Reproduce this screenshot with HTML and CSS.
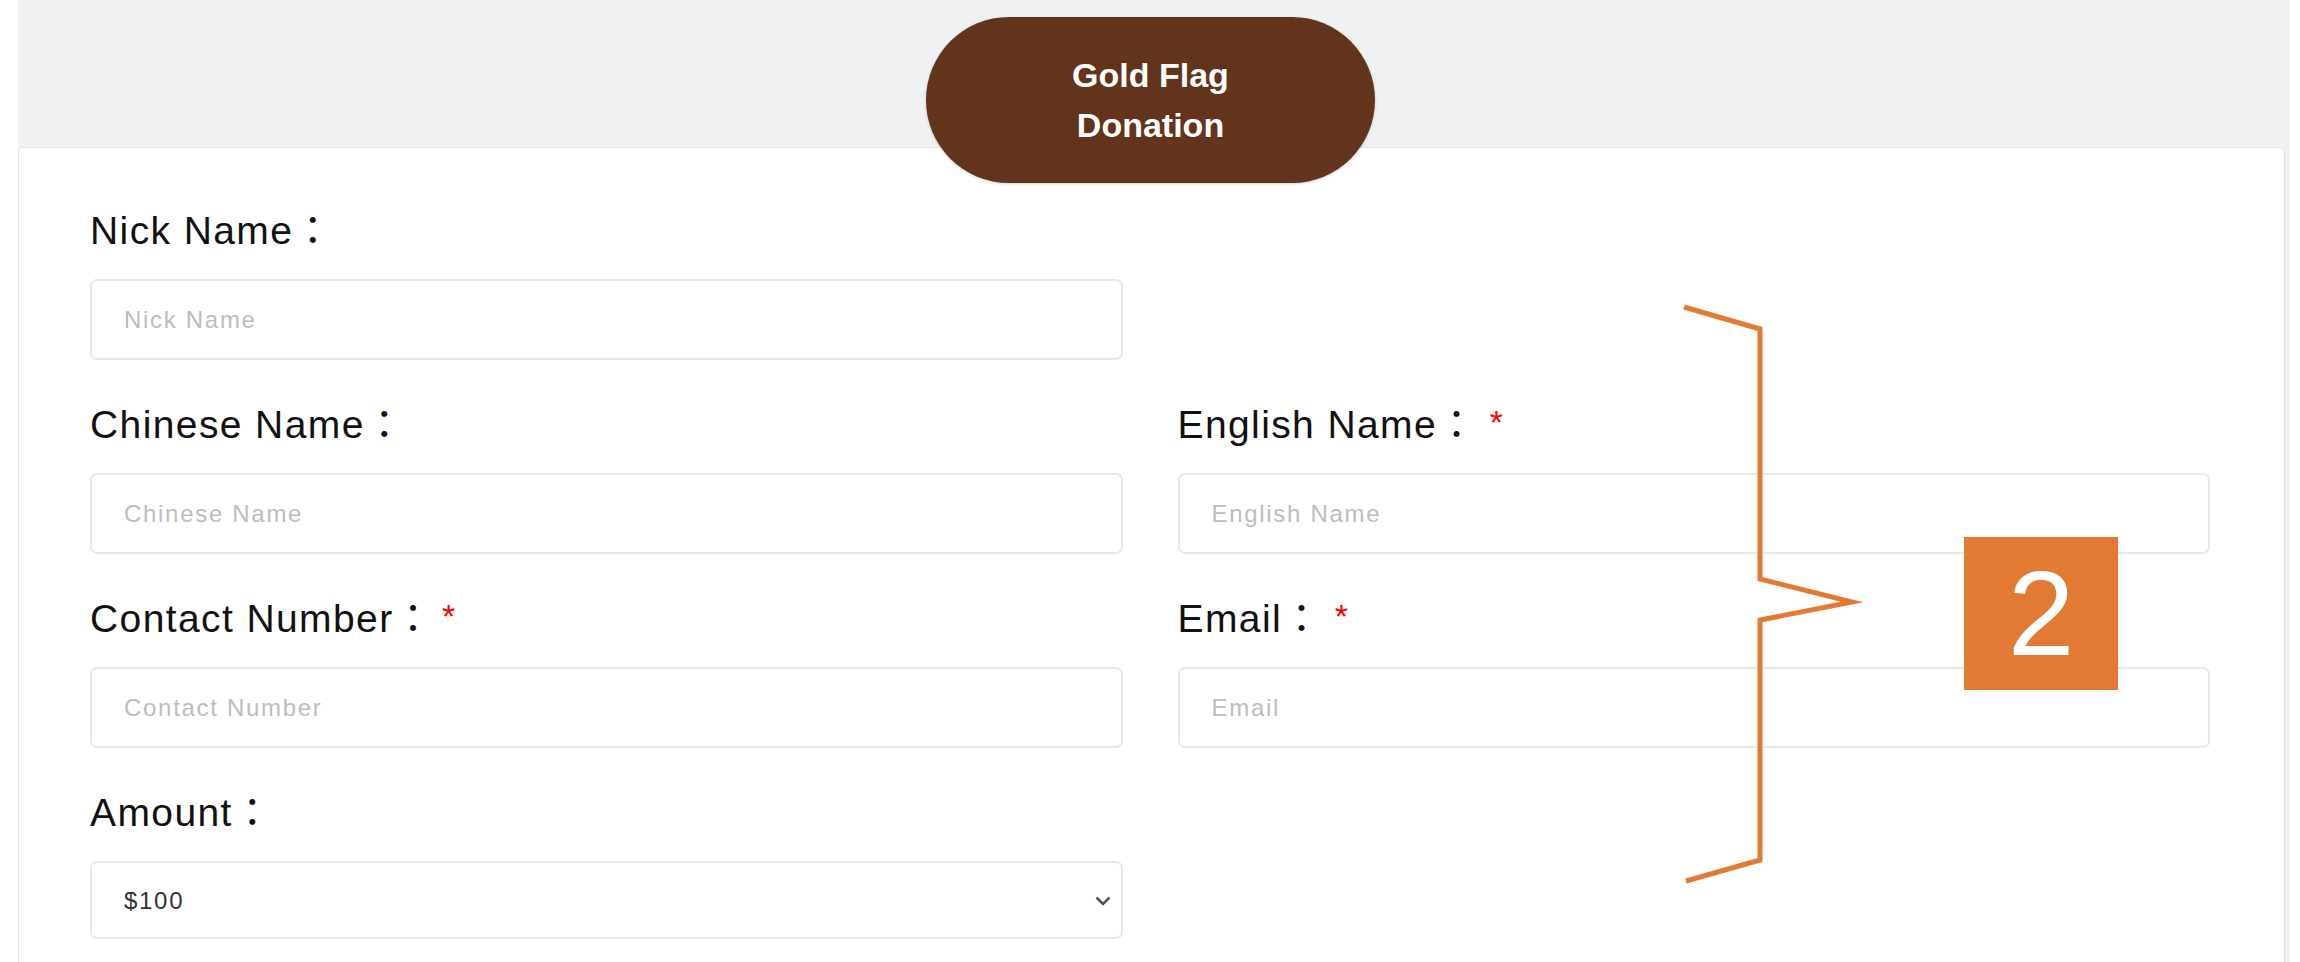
FILE: index.html
```html
<!DOCTYPE html>
<html lang="en">
<head>
<meta charset="utf-8">
<title>Gold Flag Donation</title>
<link rel="stylesheet" href="styles.css">
</head>
<body>
<div class="page">
  <div class="panel">
    <div class="title-pill">Gold Flag<br>Donation</div>
    <form class="card">
      <div class="form-grid">
        <div class="field">
          <label class="field-label">Nick Name：</label>
          <input class="field-input" type="text" placeholder="Nick Name">
        </div>
        <div class="field"></div>

        <div class="field">
          <label class="field-label">Chinese Name：</label>
          <input class="field-input" type="text" placeholder="Chinese Name">
        </div>
        <div class="field">
          <label class="field-label">English Name： <span class="req">*</span></label>
          <input class="field-input" type="text" placeholder="English Name">
        </div>

        <div class="field">
          <label class="field-label">Contact Number：<span class="req req-near">*</span></label>
          <input class="field-input" type="text" placeholder="Contact Number">
        </div>
        <div class="field">
          <label class="field-label">Email： <span class="req">*</span></label>
          <input class="field-input" type="text" placeholder="Email">
        </div>

        <div class="field">
          <label class="field-label">Amount：</label>
          <div class="select-wrap">
            <select class="field-input field-select">
              <option>$100</option>
              <option>$200</option>
              <option>$500</option>
            </select>
            <svg class="select-arrow" viewBox="0 0 16 10" width="16" height="10"><polyline points="1.5,1.5 8,8 14.5,1.5" fill="none" stroke="#555" stroke-width="2.6"/></svg>
          </div>
        </div>
        <div class="field"></div>
      </div>
    </form>
  </div>

  <svg class="annotation" viewBox="0 0 2300 962" width="2300" height="962">
    <polyline points="1684,307 1760,329 1760,579 1852,602 1760,620 1760,860 1686,881" fill="none" stroke="#e37a33" stroke-width="5" stroke-linejoin="miter" stroke-miterlimit="10"/>
  </svg>
  <div class="step-badge">2</div>
</div>
</body>
</html>
```

FILE: styles.css
```css
* { box-sizing: border-box; }

html, body {
  margin: 0;
  padding: 0;
  background: #ffffff;
}

body {
  font-family: "Liberation Sans", Arial, "Noto Sans CJK TC", sans-serif;
  color: #111111;
}

.page {
  position: relative;
  width: 2300px;
  height: 962px;
  overflow: hidden;
}

.panel {
  position: relative;
  margin-left: 18px;
  width: 2272px;
  min-height: 962px;
  padding: 147px 5px 0 0;
  background: #eff1f3;
}

.title-pill {
  position: absolute;
  top: 17px;
  left: 908px;
  width: 449px;
  height: 166px;
  border-radius: 83px;
  background: #62341b;
  box-shadow: 0 1px 3px rgba(0, 0, 0, 0.18);
  color: #ffffff;
  font-weight: bold;
  font-size: 34px;
  line-height: 50px;
  text-align: center;
  display: flex;
  align-items: center;
  justify-content: center;
  z-index: 2;
}

.card {
  display: block;
  margin: 0;
  min-height: 815px;
  background: #ffffff;
  border: 1px solid #e1e4e7;
  border-radius: 4px 4px 0 0;
  padding: 60px 74px 40px 71px;
}

.form-grid {
  display: grid;
  grid-template-columns: 1fr 1fr;
  column-gap: 55px;
  row-gap: 42px;
}

.field {
  display: flex;
  flex-direction: column;
  min-height: 152px;
}

.field-label {
  font-size: 39px;
  line-height: 45px;
  letter-spacing: 1.4px;
  color: #111111;
  margin-bottom: 26px;
  white-space: nowrap;
}

.req {
  color: #ff0000;
  font-size: 34px;
  vertical-align: top;
  line-height: 40px;
}

.req-near {
  margin-left: 8px;
}

.field-input {
  display: block;
  width: 100%;
  height: 81px;
  margin: 0;
  border: 2px solid #e8e8e8;
  border-radius: 7px;
  padding: 0 32px;
  background: #ffffff;
  font-family: "Liberation Sans", Arial, sans-serif;
  font-size: 24px;
  letter-spacing: 1.7px;
  color: #333333;
  outline: none;
}

.field-input::placeholder {
  color: #bdbdbd;
  opacity: 1;
}

.select-wrap {
  position: relative;
}

.field-select {
  appearance: none;
  -webkit-appearance: none;
  height: 78px;
  padding-right: 50px;
  color: #333333;
}

.select-arrow {
  position: absolute;
  right: 12px;
  top: 35px;
  pointer-events: none;
}

.annotation {
  position: absolute;
  left: 0;
  top: 0;
  pointer-events: none;
  z-index: 3;
}

.step-badge {
  position: absolute;
  left: 1964px;
  top: 537px;
  width: 154px;
  height: 153px;
  background: #e37a33;
  color: #ffffff;
  font-family: "Liberation Sans", Arial, sans-serif;
  font-size: 120px;
  line-height: 153px;
  text-align: center;
  z-index: 4;
}
```
